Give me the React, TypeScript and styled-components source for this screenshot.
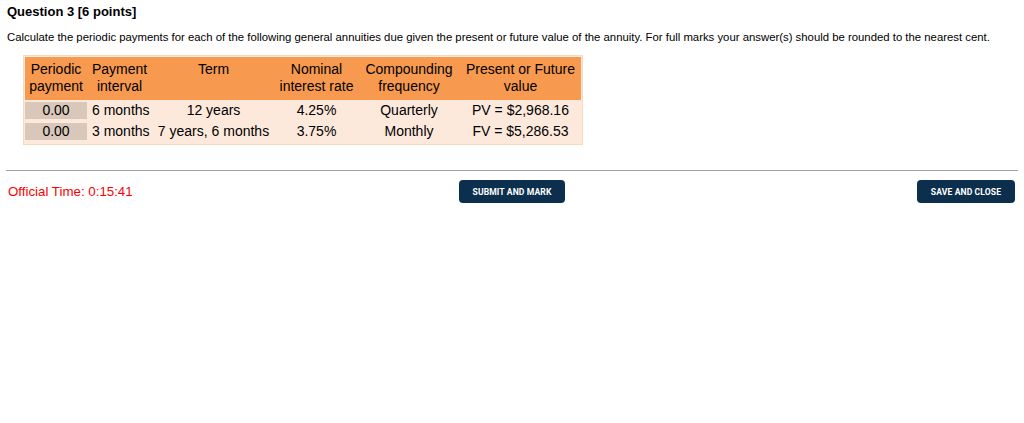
import React from 'react';
import styled, { createGlobalStyle } from 'styled-components';

const GlobalStyle = createGlobalStyle`
  body {
    margin: 0;
    background: #ffffff;
    font-family: "Liberation Sans", Arial, sans-serif;
    color: #000000;
  }
`;

const Page = styled.div`
  padding: 4px 6px 0 6px;
`;

const Title = styled.h3`
  margin: 0 0 0 1px;
  font-size: 13px;
  font-weight: bold;
  line-height: 16px;
`;

const Prompt = styled.p`
  margin: 10px 0 0 1px;
  font-size: 11.35px;
  line-height: 14px;
`;

const TableWrap = styled.div`
  margin: 11px 0 0 17px;
`;

const AnnuityTable = styled.table`
  border: 1px solid #f8d9c0;
  border-collapse: separate;
  border-spacing: 0;
  background: #fde9dc;
  font-size: 14px;
  line-height: 17px;
  padding: 1px 1px 2px;
`;

const HeadCell = styled.th<{ $w: number }>`
  width: ${(p) => p.$w}px;
  background: #f79a4f;
  font-weight: normal;
  text-align: center;
  padding: 4px 0 5px;
  vertical-align: top;
  white-space: nowrap;
`;

const Cell = styled.td<{ $align?: string }>`
  text-align: ${(p) => p.$align ?? 'center'};
  padding: 0 0 0 ${(p) => (p.$align === 'left' ? '5px' : '0')};
  height: 21px;
  white-space: nowrap;
`;

const AnswerCell = styled.td`
  padding: 0;
  height: 21px;
`;

const AnswerBox = styled.div`
  background: #d9c8ba;
  text-align: center;
  height: 17px;
  margin: 2px 0;
`;

const Rule = styled.hr`
  margin: 25px 0 0 0;
  border: none;
  border-top: 1px solid #a0a0a0;
  width: 1012px;
`;

const Footer = styled.div`
  display: grid;
  grid-template-columns: 1fr auto 1fr;
  align-items: start;
  margin-top: 9px;
`;

const Timer = styled.div`
  color: #ff0000;
  font-size: 13.3px;
  line-height: 16px;
  padding: 4px 0 0 2px;
`;

const ActionButton = styled.button`
  background: #0c2f4d;
  color: #ffffff;
  border: none;
  border-radius: 4px;
  font-family: Roboto, "Liberation Sans", sans-serif;
  font-weight: 700;
  font-size: 8.6px;
  letter-spacing: 0.1px;
  height: 23px;
  padding: 0;
  text-transform: uppercase;
  cursor: pointer;
`;

const SubmitButton = styled(ActionButton)`
  width: 106px;
`;

const SaveButton = styled(ActionButton)`
  width: 98px;
  justify-self: end;
  margin-right: 3px;
`;

const columns = [
  { w: 62, label: ['Periodic', 'payment'] },
  { w: 65, label: ['Payment', 'interval'] },
  { w: 123, label: ['Term'] },
  { w: 83, label: ['Nominal', 'interest rate'] },
  { w: 102, label: ['Compounding', 'frequency'] },
  { w: 121, label: ['Present or Future', 'value'] },
];

const rows = [
  { interval: '6 months', term: '12 years', rate: '4.25%', freq: 'Quarterly', value: 'PV = $2,968.16' },
  { interval: '3 months', term: '7 years, 6 months', rate: '3.75%', freq: 'Monthly', value: 'FV = $5,286.53' },
];

export default function App() {
  return (
    <>
      <GlobalStyle />
      <Page>
        <Title>Question 3 [6 points]</Title>
        <Prompt>
          Calculate the periodic payments for each of the following general annuities due given the present or future value of the annuity. For full marks your answer(s) should be rounded to the nearest cent.
        </Prompt>
        <TableWrap>
          <AnnuityTable>
            <thead>
              <tr>
                {columns.map((c) => (
                  <HeadCell key={c.label[0]} $w={c.w}>
                    {c.label.map((l, i) => (
                      <React.Fragment key={l}>
                        {i > 0 && <br />}
                        {l}
                      </React.Fragment>
                    ))}
                  </HeadCell>
                ))}
              </tr>
            </thead>
            <tbody>
              {rows.map((r) => (
                <tr key={r.value}>
                  <AnswerCell>
                    <AnswerBox>0.00</AnswerBox>
                  </AnswerCell>
                  <Cell $align="left">{r.interval}</Cell>
                  <Cell>{r.term}</Cell>
                  <Cell>{r.rate}</Cell>
                  <Cell>{r.freq}</Cell>
                  <Cell>{r.value}</Cell>
                </tr>
              ))}
            </tbody>
          </AnnuityTable>
        </TableWrap>
        <Rule />
        <Footer>
          <Timer>Official Time: 0:15:41</Timer>
          <SubmitButton>Submit and Mark</SubmitButton>
          <SaveButton>Save and Close</SaveButton>
        </Footer>
      </Page>
    </>
  );
}
